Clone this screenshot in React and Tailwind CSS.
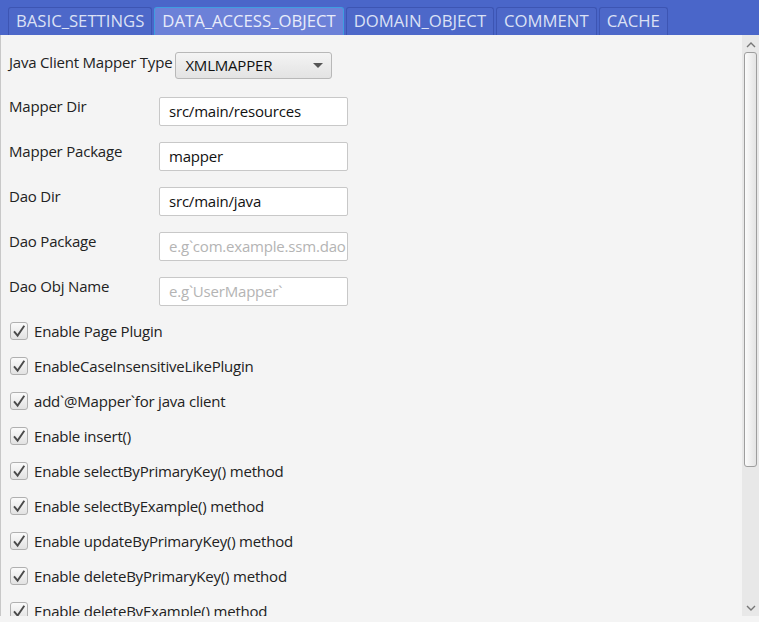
import React from "react";

const tabs = ["BASIC_SETTINGS", "DATA_ACCESS_OBJECT", "DOMAIN_OBJECT", "COMMENT", "CACHE"];

const fields = [
  { label: "Mapper Dir", value: "src/main/resources" },
  { label: "Mapper Package", value: "mapper" },
  { label: "Dao Dir", value: "src/main/java" },
  { label: "Dao Package", placeholder: "e.g`com.example.ssm.dao" },
  { label: "Dao Obj Name", placeholder: "e.g`UserMapper`" },
];

const checks = [
  "Enable Page Plugin",
  "EnableCaseInsensitiveLikePlugin",
  "add`@Mapper`for java client",
  "Enable insert()",
  "Enable selectByPrimaryKey() method",
  "Enable selectByExample() method",
  "Enable updateByPrimaryKey() method",
  "Enable deleteByPrimaryKey() method",
  "Enable deleteByExample() method",
];

const Check = () => (
  <span className="flex h-[18px] w-[18px] shrink-0 items-center justify-center rounded-[3px] border border-[#b0b0b0] bg-gradient-to-b from-[#fafafa] to-[#e2e2e2]">
    <svg viewBox="0 0 14 14" width="14" height="14">
      <path d="M2 7.3 L5.6 11.6 L12.3 1.8" stroke="#4a4a4a" strokeWidth="1.9" fill="none" />
    </svg>
  </span>
);

export default function App() {
  return (
    <div
      className="flex h-[622px] w-[759px] flex-col overflow-hidden bg-[#f4f4f4] text-[#222]"
      style={{ fontFamily: '"Open Sans", "Noto Sans", sans-serif' }}
    >
      {/* tab header */}
      <div className="flex h-[35px] shrink-0 items-end gap-[2px] bg-[#4a66c9] pl-[8px]">
        {tabs.map((t, i) =>
          i === 1 ? (
            <div
              key={t}
              className="flex h-[28px] items-center rounded-t-[3px] border border-b-0 border-[#3f9ddf] bg-[#6c81d8] px-[7px] text-[16.7px] leading-none text-[#e8ecfa]"
            >
              {t}
            </div>
          ) : (
            <div
              key={t}
              className="flex h-[28px] items-center rounded-t-[3px] border border-b-0 border-[#3d55b3] bg-[#4d68c9] px-[7px] text-[16.7px] leading-none text-[#dbe1f5]"
            >
              {t}
            </div>
          )
        )}
      </div>

      {/* scroll pane */}
      <div className="flex h-[581px] shrink-0 border-l border-[#c8c8c8] tracking-[-0.2px]">
        <div className="flex-1 overflow-hidden pl-[8px] pt-[18px]">
          <div className="flex h-[28px] items-start">
            <span className="text-[15px] leading-[18px]">Java Client Mapper Type</span>
            <div className="ml-[3px] mt-[-1px] flex h-[27px] w-[157px] items-center justify-between rounded-[3px] border border-[#b8b8b8] bg-gradient-to-b from-[#f4f4f4] to-[#e3e3e3] pl-[9px] pr-[8px]">
              <span className="text-[15px] text-[#111]">XMLMAPPER</span>
              <svg width="10" height="6" viewBox="0 0 10 6">
                <path d="M0 0 L10 0 L5 5 Z" fill="#555" />
              </svg>
            </div>
          </div>

          <div className="mt-[16px] flex flex-col gap-[16px]">
            {fields.map((f) => (
              <div key={f.label} className="flex h-[29px] items-start">
                <span className="w-[150px] text-[15px] leading-[18px]">{f.label}</span>
                <div className="flex h-[29px] w-[189px] items-center overflow-hidden whitespace-nowrap rounded-[2px] border border-[#c8c8c8] bg-white pl-[9px] text-[15px]">
                  {f.value ? (
                    <span className="text-[#111]">{f.value}</span>
                  ) : (
                    <span className="text-[#b4b4b4]">{f.placeholder}</span>
                  )}
                </div>
              </div>
            ))}
          </div>

          <div className="mt-[16px] flex flex-col gap-[17px]">
            {checks.map((c) => (
              <div key={c} className="flex h-[18px] items-center gap-[6px] pl-[1px]">
                <Check />
                <span className="whitespace-nowrap text-[15px] leading-none">{c}</span>
              </div>
            ))}
          </div>
        </div>

        {/* vertical scrollbar */}
        <div className="flex w-[17px] shrink-0 flex-col items-center bg-[#e8e8e8]">
          <svg className="mt-[7px]" width="10" height="6" viewBox="0 0 10 6">
            <path d="M1 5 L5 1 L9 5" stroke="#777" strokeWidth="1.4" fill="none" />
          </svg>
          <div className="mt-[4px] h-[415px] w-[13px] rounded-[3px] border border-[#9e9e9e] bg-gradient-to-r from-[#fbfbfb] to-[#e4e4e4]" />
          <div className="flex-1" />
          <svg className="mb-[5px]" width="10" height="6" viewBox="0 0 10 6">
            <path d="M1 1 L5 5 L9 1" stroke="#777" strokeWidth="1.4" fill="none" />
          </svg>
        </div>
      </div>
      <div className="flex-1 bg-[#f4f4f4]" />
    </div>
  );
}
